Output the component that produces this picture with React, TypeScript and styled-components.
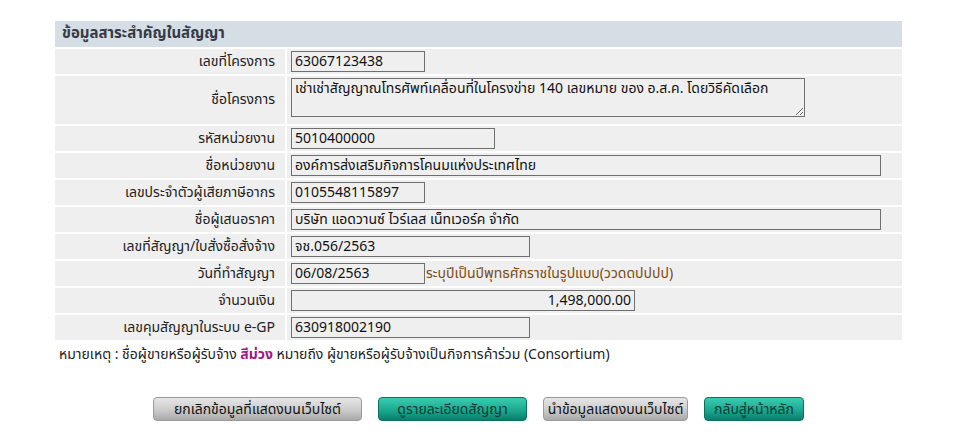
import React, { FC } from 'react';
import styled, { createGlobalStyle, css } from 'styled-components';

const GlobalStyle = createGlobalStyle`
  html, body {
    margin: 0;
    padding: 0;
    background: #ffffff;
  }
  body {
    font-family: Tahoma, "Noto Sans Thai", "Noto Sans", "DejaVu Sans", sans-serif;
    font-size: 14px;
    line-height: 18px;
    color: #222;
  }
`;

const Page = styled.div`
  width: 957px;
  padding-top: 21px;
  display: flex;
  flex-direction: column;
  align-items: center;
`;

const Table = styled.div`
  width: 847px;
  display: grid;
  grid-template-columns: 230px 1fr;
  gap: 2px;
  background: #ffffff;
`;

const Header = styled.div`
  grid-column: 1 / -1;
  height: 26px;
  display: flex;
  align-items: center;
  padding: 0 7px;
  background: #d5dde5;
  font-weight: bold;
  font-size: 15px;
  color: #333a45;
`;

const Label = styled.div`
  display: flex;
  align-items: center;
  justify-content: flex-end;
  padding: 0 10px;
  background: #efefef;
  color: #222;
`;

const Value = styled.div`
  display: flex;
  align-items: center;
  gap: 1px;
  padding: 2px 4px;
  background: #efefef;
  min-height: 21px;
`;

const fieldBase = css`
  box-sizing: border-box;
  font-family: inherit;
  font-size: 14px;
  color: #111;
  background: #efefef;
  border: 1px solid #6f6f6f;
  border-radius: 0;
  padding: 0 3px;
  outline: none;
`;

const Field = styled.input<{ $w: number; $right?: boolean }>`
  ${fieldBase};
  width: ${(p) => p.$w}px;
  height: 21px;
  text-align: ${(p) => (p.$right ? 'right' : 'left')};
`;

const Area = styled.textarea`
  ${fieldBase};
  width: 514px;
  height: 39px;
  resize: both;
  margin: 0 0 5px;
  padding-top: 1px;
  line-height: 17px;
`;

const Hint = styled.span`
  color: #7a4a12;
`;

const Note = styled.div`
  width: 847px;
  padding: 6px 4px 0;
  box-sizing: border-box;
  color: #222;
`;

const Purple = styled.span`
  color: #a3177f;
  font-weight: bold;
`;

const Buttons = styled.div`
  margin-top: 33px;
  display: flex;
  gap: 16px;
  justify-content: center;
  width: 957px;
`;

const Button = styled.button<{ $w: number; $tone: 'gray' | 'teal' }>`
  width: ${(p) => p.$w}px;
  height: 24px;
  border-radius: 4px;
  font-family: inherit;
  font-size: 14px;
  cursor: pointer;
  padding: 0;
  ${(p) =>
    p.$tone === 'gray'
      ? css`
          border: 1px solid #9a9a9a;
          color: #111;
          background: linear-gradient(#e6e6e6, #cbcbcb 55%, #a9a9a9);
        `
      : css`
          border: 1px solid #0d6e60;
          color: #123a33;
          background: linear-gradient(#3acdb1, #1aa98f 55%, #0b7e6b);
        `}
`;

type Row = {
  label: string;
  value: string;
  width: number;
  right?: boolean;
  area?: boolean;
  hint?: string;
};

const rows: Row[] = [
  { label: 'เลขที่โครงการ', value: '63067123438', width: 134 },
  {
    label: 'ชื่อโครงการ',
    value: 'เช่าเช่าสัญญาณโทรศัพท์เคลื่อนที่ในโครงข่าย 140 เลขหมาย ของ อ.ส.ค. โดยวิธีคัดเลือก',
    width: 514,
    area: true,
  },
  { label: 'รหัสหน่วยงาน', value: '5010400000', width: 204 },
  { label: 'ชื่อหน่วยงาน', value: 'องค์การส่งเสริมกิจการโคนมแห่งประเทศไทย', width: 590 },
  { label: 'เลขประจำตัวผู้เสียภาษีอากร', value: '0105548115897', width: 134 },
  { label: 'ชื่อผู้เสนอราคา', value: 'บริษัท แอดวานซ์ ไวร์เลส เน็ทเวอร์ค จำกัด', width: 590 },
  { label: 'เลขที่สัญญา/ใบสั่งซื้อสั่งจ้าง', value: 'จช.056/2563', width: 239 },
  {
    label: 'วันที่ทำสัญญา',
    value: '06/08/2563',
    width: 134,
    hint: 'ระบุปีเป็นปีพุทธศักราชในรูปแบบ(ววดดปปปป)',
  },
  { label: 'จำนวนเงิน', value: '1,498,000.00', width: 344, right: true },
  { label: 'เลขคุมสัญญาในระบบ e-GP', value: '630918002190', width: 239 },
];

const buttons: { text: string; w: number; tone: 'gray' | 'teal' }[] = [
  { text: 'ยกเลิกข้อมูลที่แสดงบนเว็บไซต์', w: 209, tone: 'gray' },
  { text: 'ดูรายละเอียดสัญญา', w: 149, tone: 'teal' },
  { text: 'นำข้อมูลแสดงบนเว็บไซต์', w: 145, tone: 'gray' },
  { text: 'กลับสู่หน้าหลัก', w: 100, tone: 'teal' },
];

const App: FC = () => (
  <>
    <GlobalStyle />
    <Page>
      <Table>
        <Header>ข้อมูลสาระสำคัญในสัญญา</Header>
        {rows.map((row) => (
          <React.Fragment key={row.label}>
            <Label>{row.label}</Label>
            <Value>
              {row.area ? (
                <Area readOnly defaultValue={row.value} />
              ) : (
                <Field readOnly defaultValue={row.value} $w={row.width} $right={row.right} />
              )}
              {row.hint && <Hint>{row.hint}</Hint>}
            </Value>
          </React.Fragment>
        ))}
      </Table>
      <Note>
        หมายเหตุ : ชื่อผู้ขายหรือผู้รับจ้าง <Purple>สีม่วง</Purple> หมายถึง
        ผู้ขายหรือผู้รับจ้างเป็นกิจการค้าร่วม (Consortium)
      </Note>
      <Buttons>
        {buttons.map((b) => (
          <Button key={b.text} $w={b.w} $tone={b.tone}>
            {b.text}
          </Button>
        ))}
      </Buttons>
    </Page>
  </>
);

export default App;
